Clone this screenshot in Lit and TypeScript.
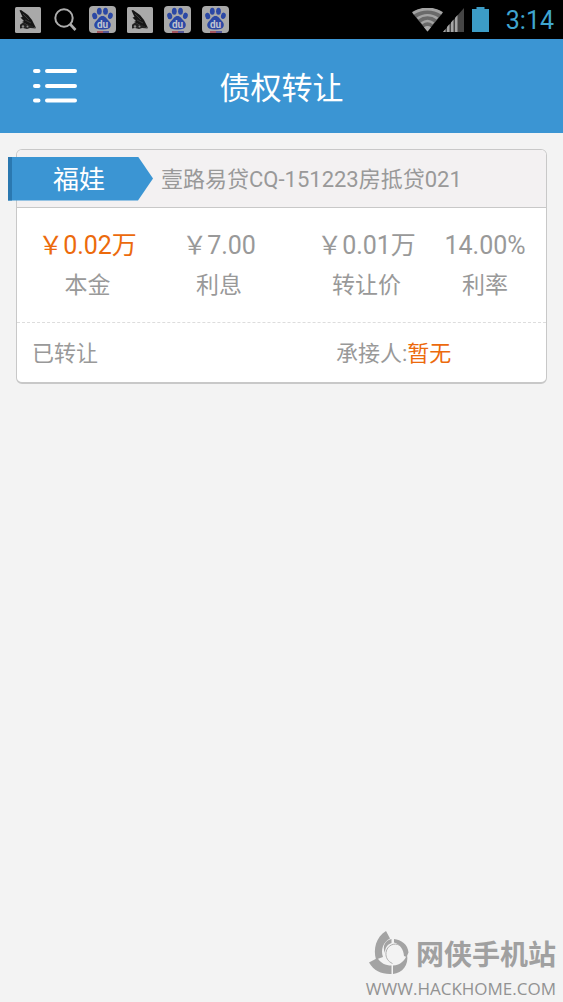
import { LitElement, html, css, svg } from "lit";
import { customElement, state } from "lit/decorators.js";
import { classMap } from "lit/directives/class-map.js";

interface Figure {
  value: string;
  label: string;
  accent?: boolean;
}

const sketchIcon = svg`<svg width="26" height="26" viewBox="0 0 26 26" aria-hidden="true">
  <rect width="26" height="26" rx="1.5" fill="#a9a9a9"/>
  <path d="M4.500 3.500L6 3l7 5 4 5 4 8-6-2-8-4 2-1-3.500-3.500L7.500 10z" fill="#151515"/>
  <path d="M8 7l6 6M10 13l6 3" stroke="#555" stroke-width=".6"/>
  <path d="M5 18c2-3 5-2 6-1s4 0 6 2l4 2.500-6-.5-3 1-4-1-3 .5z" fill="#222"/>
  <circle cx="8" cy="19.500" r="1.200" fill="#8a8a8a"/>
  <circle cx="12.500" cy="19.500" r="1" fill="#8a8a8a"/>
</svg>`;

const searchIcon = svg`<svg width="26" height="26" viewBox="0 0 26 26" fill="none" stroke="#adadad" aria-hidden="true">
  <circle cx="12" cy="11" r="8.700" stroke-width="2"/>
  <path d="M18 17l5.500 6" stroke-width="2.600"/>
</svg>`;

const pawIcon = svg`<svg width="27" height="28" viewBox="0 0 27 28" aria-hidden="true">
  <rect width="27" height="27" rx="4" fill="#a9a9a9"/>
  <g fill="#2b48a5">
    <ellipse cx="5.700" cy="10" rx="2.500" ry="3.200" transform="rotate(-12 5.700 10)"/>
    <ellipse cx="10.300" cy="5.200" rx="2.400" ry="3.500"/>
    <ellipse cx="16.500" cy="5.200" rx="2.400" ry="3.500"/>
    <ellipse cx="21.400" cy="9.800" rx="2.400" ry="3.200" transform="rotate(12 21.400 9.800)"/>
    <path d="M13.500 10c3 0 4 2.500 6 4.500 2.200 2.100 2.800 4 2 6-1 2.600-3.500 3-8 2.900-4.500.1-7-.3-8-2.900-.8-2 .1-3.900 2.200-6C9.600 12.500 10.500 10 13.500 10z"/>
  </g>
  <text x="13.500" y="21.500" text-anchor="middle" fill="#c0c4d0" font-family="Roboto, sans-serif" font-size="10" font-weight="700">du</text>
  <path d="M8 26h6" stroke="#a33a4a" stroke-width="1.500"/>
  <path d="M14 26h6" stroke="#3a3f96" stroke-width="1.500"/>
</svg>`;

const wifiIcon = svg`<svg width="31" height="24" viewBox="0 0 31 24" fill="none" aria-hidden="true">
  <path d="M0 4.500C9-1.500 22-1.500 31 4.500L15.500 23.500z" fill="#6a6a6a"/>
  <path d="M1 5.200c9-5.500 20-5.500 29 0" stroke="#a4a4a4" stroke-width="3"/>
  <path d="M5.500 10.500c6-4.500 14-4.500 20 0M9.500 15.200c4-3 8-3 12 0" stroke="#a4a4a4" stroke-width="2.400"/>
  <path d="M12 19.200c2-1.600 5-1.600 7 0l-3.500 4.300z" fill="#acacac"/>
</svg>`;

const signalIcon = svg`<svg width="21" height="24" viewBox="0 0 21 24" aria-hidden="true">
  <path d="M0 24L21 0v24z" fill="#454545"/>
  <path d="M0 24l2.500-3v3zM4 24v-5l2.500-3v8zM8 24v-9.500l2.500-3V24zM12 24V10l2.500-3v17z" fill="#a6a6a6"/>
</svg>`;

const batteryIcon = svg`<svg width="17" height="25" viewBox="0 0 17 25" aria-hidden="true">
  <path d="M4.500 0h8v2H17v23H0V2h4.500z" fill="#3c9cc6"/>
</svg>`;

const menuIcon = svg`<svg width="44" height="36" viewBox="0 0 44 36" fill="none" stroke="#fff" stroke-width="4" stroke-linecap="round" aria-hidden="true">
  <path d="M2 3h3.500M14 3h28M2 18h3.500M14 18h28M2 32.500h3.500M14 32.500h28"/>
</svg>`;

const swirlLogo = svg`<svg width="40" height="44" viewBox="0 0 40 44" aria-hidden="true">
  <g fill="#a3a3a3">
    <path d="M17 0l4 7.500C14 11 11.500 19 14 26l-7 2.500C4 18 7 6 17 0z"/>
    <path d="M0 31.500L8.500 27c3 5 8 7.500 14 7.500V43C13 43.500 5 40 0 31.500z"/>
    <path d="M24 34.500c7.500-.5 12-5 14-11C40 34 33.500 42 24 43z"/>
    <path d="M25 8c7 .5 14 5.500 14.500 13.500l-2 4.500-2.500-1C34.500 18 31 13.500 25 11.500z"/>
    <path d="M22.500 8v4c-4.500 1.500-6.500 5-6.500 10C13 15 16 9.500 22.500 8z"/>
  </g>
  <path d="M31 14.500c-6-3.500-13 0-14 7-.6 5 2 9 6.500 11" fill="none" stroke="#b0b0b0"/>
</svg>`;

@customElement("status-bar")
class StatusBar extends LitElement {
  static styles = css`
    :host {
      display: flex;
      align-items: center;
      justify-content: space-between;
      height: 39px;
      padding: 0 9px 0 15px;
      background: #000;
      color: #3fa5cf;
      font: 25px/39px Roboto, sans-serif;
    }
    .group {
      display: flex;
      align-items: center;
    }
    .apps {
      gap: 11px;
    }
    .battery {
      margin: 0 17px 0 8px;
    }
    time {
      padding-top: 2px;
    }
    svg {
      display: block;
    }
  `;

  render() {
    return html`
      <div class="group apps">
        ${sketchIcon}${searchIcon}${pawIcon}${sketchIcon}${pawIcon}${pawIcon}
      </div>
      <div class="group">
        ${wifiIcon}${signalIcon}
        <span class="battery">${batteryIcon}</span>
        <time>3:14</time>
      </div>
    `;
  }
}

@customElement("transfer-card")
class TransferCard extends LitElement {
  @state() private figures: Figure[] = [
    { value: "￥0.02万", label: "本金", accent: true },
    { value: "￥7.00", label: "利息" },
    { value: "￥0.01万", label: "转让价" },
    { value: "14.00%", label: "利率" },
  ];

  static styles = css`
    :host {
      display: block;
      border: 1px solid #c8c8c8;
      border-bottom-width: 2px;
      border-radius: 6px;
      background: #fff;
      color: #999;
    }
    .head {
      display: flex;
      align-items: center;
      gap: 8px;
      height: 57px;
      margin-left: -9px;
    }
    .top {
      background: #f3f1f2;
      border-bottom: 1px solid #c8c8c8;
      border-radius: 5px 5px 0 0;
    }
    .ribbon {
      flex: none;
      box-sizing: border-box;
      width: 145px;
      padding: 2px 0 0 41px;
      border-left: 4px solid #2a78b0;
      background: #3b95d3;
      clip-path: polygon(0 0, 130px 0, 100% 50%, 130px 100%, 0 100%);
      color: #fff;
      font-size: 26px;
      line-height: 42px;
    }
    h2 {
      margin: 0;
      padding-top: 2px;
      font-size: 22px;
      font-weight: 400;
      line-height: 32px;
      white-space: nowrap;
    }
    dl {
      display: grid;
      grid-template-columns: 123fr 140fr 155fr 82fr;
      margin: 0;
      padding: 18px 20px 17px 9px;
      border-bottom: 1px dashed #ddd;
      text-align: center;
      white-space: nowrap;
    }
    .figure {
      display: flex;
      flex-direction: column-reverse;
      justify-content: flex-end;
    }
    dt {
      font-size: 23px;
      line-height: 39px;
    }
    dd {
      margin: 0;
      font-size: 25px;
      line-height: 40px;
    }
    .accent {
      color: #ec6a0c;
    }
    .foot {
      display: grid;
      grid-template-columns: 304fr 210fr;
      padding: 15px 0 12px 15px;
      font-size: 22px;
      line-height: 32px;
    }
  `;

  render() {
    return html`
      <div class="top">
        <div class="head">
          <span class="ribbon">福娃</span>
          <h2>壹路易贷CQ-151223房抵贷021</h2>
        </div>
      </div>
      <dl>
        ${this.figures.map(
          (f) => html`<div class="figure">
            <dt>${f.label}</dt>
            <dd class=${classMap({ accent: !!f.accent })}>${f.value}</dd>
          </div>`
        )}
      </dl>
      <div class="foot">
        <span>已转让</span>
        <span>承接人:<span class="accent">暂无</span></span>
      </div>
    `;
  }
}

@customElement("app-root")
class AppRoot extends LitElement {
  static styles = css`
    :host {
      display: flex;
      flex-direction: column;
      min-height: 100vh;
      background: #f3f3f3;
      font-family: Roboto, "Noto Sans CJK SC", sans-serif;
    }
    header {
      display: grid;
      grid-template-columns: 1fr auto 1fr;
      align-items: center;
      height: 94px;
      padding: 0 33px;
      background: #3b95d3;
      color: #fff;
    }
    button {
      justify-self: start;
      padding: 0;
      border: 0;
      background: none;
      cursor: pointer;
    }
    svg {
      display: block;
    }
    h1 {
      margin: 0;
      padding-top: 6px;
      font-size: 31px;
      font-weight: 400;
      line-height: 46px;
    }
    main {
      flex: 1;
      padding: 16px;
    }
    footer {
      display: flex;
      flex-direction: column;
      align-items: flex-end;
      padding: 0 7px;
      color: #999;
    }
    .brand {
      display: flex;
      align-items: center;
      gap: 7px;
      color: #a0a0a0;
      font-size: 28px;
      font-weight: 700;
      line-height: 40px;
    }
    .brand span {
      padding-top: 6px;
    }
    .site {
      color: #929292;
      font-family: "Open Sans", sans-serif;
      font-size: 17px;
      line-height: 26px;
    }
  `;

  render() {
    return html`
      <status-bar></status-bar>
      <header>
        <button type="button" aria-label="菜单">${menuIcon}</button>
        <h1>债权转让</h1>
      </header>
      <main><transfer-card></transfer-card></main>
      <footer>
        <div class="brand">${swirlLogo}<span>网侠手机站</span></div>
        <span class="site">WWW.HACKHOME.COM</span>
      </footer>
    `;
  }
}
